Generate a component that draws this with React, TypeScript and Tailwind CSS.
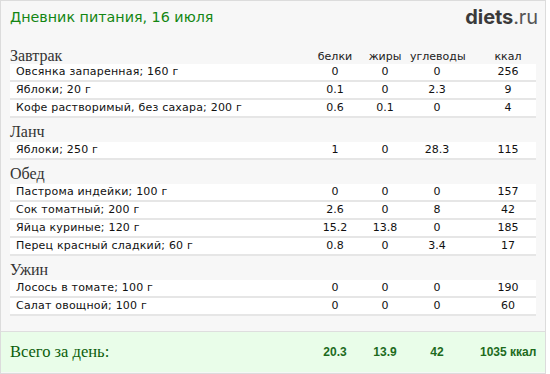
import React from 'react'

type Item = { name: string; p: string; f: string; c: string; k: string }
type Meal = { title: string; items: Item[] }

const meals: Meal[] = [
  {
    title: 'Завтрак',
    items: [
      { name: 'Овсянка запаренная; 160 г', p: '0', f: '0', c: '0', k: '256' },
      { name: 'Яблоки; 20 г', p: '0.1', f: '0', c: '2.3', k: '9' },
      { name: 'Кофе растворимый, без сахара; 200 г', p: '0.6', f: '0.1', c: '0', k: '4' },
    ],
  },
  {
    title: 'Ланч',
    items: [{ name: 'Яблоки; 250 г', p: '1', f: '0', c: '28.3', k: '115' }],
  },
  {
    title: 'Обед',
    items: [
      { name: 'Пастрома индейки; 100 г', p: '0', f: '0', c: '0', k: '157' },
      { name: 'Сок томатный; 200 г', p: '2.6', f: '0', c: '8', k: '42' },
      { name: 'Яйца куриные; 120 г', p: '15.2', f: '13.8', c: '0', k: '185' },
      { name: 'Перец красный сладкий; 60 г', p: '0.8', f: '0', c: '3.4', k: '17' },
    ],
  },
  {
    title: 'Ужин',
    items: [
      { name: 'Лосось в томате; 100 г', p: '0', f: '0', c: '0', k: '190' },
      { name: 'Салат овощной; 100 г', p: '0', f: '0', c: '0', k: '60' },
    ],
  },
]

const cols = 'grid grid-cols-[1fr_50px_50px_54px_72px]'
const serif = "font-['Liberation_Serif',serif]"

export default function App() {
  return (
    <div className="w-[550px] h-[374px] bg-white font-['DejaVu_Sans',sans-serif]">
      <div className="w-[546px] h-[374px] border border-[#dcdcdc] bg-[#f7f7f7] flex flex-col">
        {/* шапка */}
        <div className="flex items-center justify-between h-[32px] pl-[9px] pr-[7px]">
          <h1 className="text-[14.3px] leading-5 text-[#138613]">Дневник питания, 16 июля</h1>
          <div className="font-['Inter',sans-serif] text-[20px] leading-5 tracking-[-0.1px]">
            <span className="font-bold text-[#3a3a3a]">diets</span>
            <span className="text-[#555]">.ru</span>
          </div>
        </div>

        <div className="px-[9px] flex-1">
          {meals.map((meal, i) => (
            <div key={meal.title}>
              <div className={`${cols} ${i === 0 ? 'h-[31px] pt-[13px]' : 'h-6 pt-1'} items-start`}>
                <div className={`${serif} text-[16px] leading-5 text-[#333]`}>{meal.title}</div>
                {i === 0 && (
                  <>
                    <div className="text-center text-[11px] leading-5 pt-[1px] text-[#222]">белки</div>
                    <div className="text-center text-[11px] leading-5 pt-[1px] text-[#222]">жиры</div>
                    <div className="text-center text-[11px] leading-5 pt-[1px] text-[#222]">углеводы</div>
                    <div className="text-center text-[11px] leading-5 pt-[1px] pl-4 text-[#222]">ккал</div>
                  </>
                )}
              </div>
              {meal.items.map(it => (
                <div
                  key={it.name}
                  className={`${cols} h-[18px] items-center bg-white border-b-2 border-[#e6e6e6] text-[11px] leading-4 text-[#111]`}
                >
                  <div className="pl-[6px] truncate tracking-[0.2px]">{it.name}</div>
                  <div className="text-center">{it.p}</div>
                  <div className="text-center">{it.f}</div>
                  <div className="text-center">{it.c}</div>
                  <div className="text-center pl-4">{it.k}</div>
                </div>
              ))}
            </div>
          ))}
        </div>

        {/* итого */}
        <div className={`${cols} h-[41px] items-center bg-[#e9fde9] border-t border-[#dedede] pl-[9px] pr-[9px] mb-[1px]`}>
          <div className={`${serif} text-[16.5px] leading-5 text-[#0b5e0b]`}>Всего за день:</div>
          <div className="text-center font-['Liberation_Sans',sans-serif] font-bold text-[12px] text-[#1d6b1d]">20.3</div>
          <div className="text-center font-['Liberation_Sans',sans-serif] font-bold text-[12px] text-[#1d6b1d]">13.9</div>
          <div className="text-center font-['Liberation_Sans',sans-serif] font-bold text-[12px] text-[#1d6b1d]">42</div>
          <div className="text-center pl-4 font-['Liberation_Sans',sans-serif] font-bold text-[12px] text-[#1d6b1d] whitespace-nowrap">1035 ккал</div>
        </div>
      </div>
    </div>
  )
}
